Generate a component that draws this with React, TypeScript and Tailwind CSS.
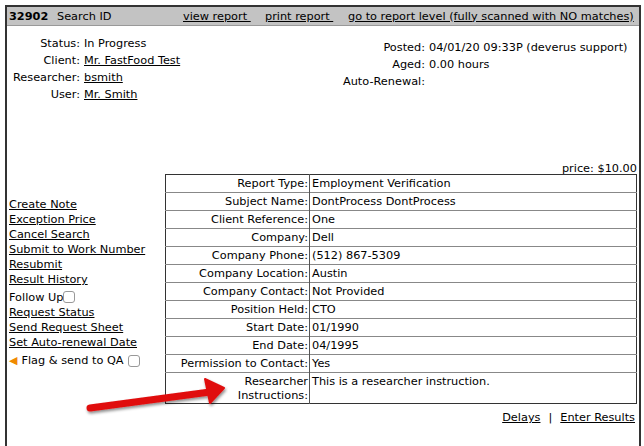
import React from "react";

const rows: [string, string][] = [
  ["Report Type:", "Employment Verification"],
  ["Subject Name:", "DontProcess DontProcess"],
  ["Client Reference:", "One"],
  ["Company:", "Dell"],
  ["Company Phone:", "(512) 867-5309"],
  ["Company Location:", "Austin"],
  ["Company Contact:", "Not Provided"],
  ["Position Held:", "CTO"],
  ["Start Date:", "01/1990"],
  ["End Date:", "04/1995"],
  ["Permission to Contact:", "Yes"],
];

const links1 = ["Create Note", "Exception Price", "Cancel Search", "Submit to Work Number", "Resubmit", "Result History"];
const links2 = ["Request Status", "Send Request Sheet", "Set Auto-renewal Date"];

function Box() {
  return <span className="inline-block w-[12px] h-[12px] border border-[#999] rounded-[3px] bg-white align-[-2px]" />;
}

export default function App() {
  return (
    <div className="w-[644px] h-[446px] bg-white overflow-hidden text-[11.3px] leading-[17px] text-black" style={{ fontFamily: '"DejaVu Sans", Verdana, sans-serif' }}>
      <div className="relative ml-[5px] mt-[5px] w-[636px] h-[441px] border-[#333] border-t-2 border-x-2">
        <div className="h-[19px] bg-[#c3c3c3] flex items-center border-b border-[#999] whitespace-nowrap">
          <span className="w-[50px] pl-[2px] font-bold">32902</span>
          <span className="w-[126px]">Search ID</span>
          <span className="w-[82px]"><span className="underline">view report&nbsp;</span></span>
          <span className="w-[83px]"><span className="underline">print report&nbsp;</span></span>
          <span className="underline">go to report level (fully scanned with NO matches)</span>
        </div>
        <div className="flex mt-[9px] whitespace-nowrap">
          <div className="w-[328px] grid grid-cols-[73px_1fr] gap-x-[4px] auto-rows-[17px]">
            <span className="text-right">Status:</span><span>In Progress</span>
            <span className="text-right">Client:</span><span className="underline justify-self-start">Mr. FastFood Test</span>
            <span className="text-right">Researcher:</span><span className="underline justify-self-start">bsmith</span>
            <span className="text-right">User:</span><span className="underline justify-self-start">Mr. Smith</span>
          </div>
          <div className="mt-[4px] grid grid-cols-[90px_1fr] gap-x-[4px] auto-rows-[17px]">
            <span className="text-right">Posted:</span><span>04/01/20 09:33P (deverus support)</span>
            <span className="text-right">Aged:</span><span>0.00 hours</span>
            <span className="text-right">Auto-Renewal:</span><span></span>
          </div>
        </div>
        <div className="flex justify-end mt-[60px] pr-[2px] h-[11px] leading-[11px]">price: $10.00</div>
        <div className="flex">
          <div className="w-[158px] pl-[2px] pt-[23px] leading-[15px] whitespace-nowrap">
            {links1.map((l) => (
              <div key={l} className="underline">{l}</div>
            ))}
            <div className="mt-[3px]">Follow Up<Box /></div>
            {links2.map((l) => (
              <div key={l} className="underline">{l}</div>
            ))}
            <div className="mt-[3px] flex items-center gap-[4px]">
              <span className="text-[#f08a00] text-[11px]">◀</span>
              <span>Flag &amp; send to QA</span>
              <Box />
            </div>
          </div>
          <table className="w-[472px] border-collapse border border-[#333] leading-[17px]">
            <tbody>
              {rows.map(([k, v]) => (
                <tr key={k} className="border-b border-[#888]">
                  <td className="w-[144px] text-right pr-[1px] border-r border-[#555] h-[18px] p-0">{k}</td>
                  <td className="pl-[2px] p-0">{v}</td>
                </tr>
              ))}
              <tr>
                <td className="text-right pr-[1px] border-r border-[#555] align-top leading-[14px] pt-[2px] pb-0">Researcher<br />Instructions:</td>
                <td className="pl-[2px] align-top leading-[14px] pt-[2px]">This is a researcher instruction.</td>
              </tr>
            </tbody>
          </table>
        </div>
        <div className="flex justify-end mt-[5px] pr-[4px] gap-[8px]">
          <span className="underline">Delays</span>
          <span>|</span>
          <span className="underline">Enter Results</span>
        </div>
        <svg className="absolute left-[71px] top-[363px]" width="150" height="48" viewBox="0 0 150 48">
          <defs>
            <filter id="sh" x="-20%" y="-50%" width="140%" height="200%">
              <feDropShadow dx="1" dy="2" stdDeviation="1.5" floodColor="#000" floodOpacity="0.45" />
            </filter>
          </defs>
          <g filter="url(#sh)">
            <path d="M12 38 L132 22" stroke="#e01010" strokeWidth="7" strokeLinecap="round" />
            <path d="M127 9 L146 18 L132 33 Z" fill="#e01010" stroke="#e01010" strokeWidth="2" strokeLinejoin="round" />
          </g>
        </svg>
      </div>
    </div>
  );
}
